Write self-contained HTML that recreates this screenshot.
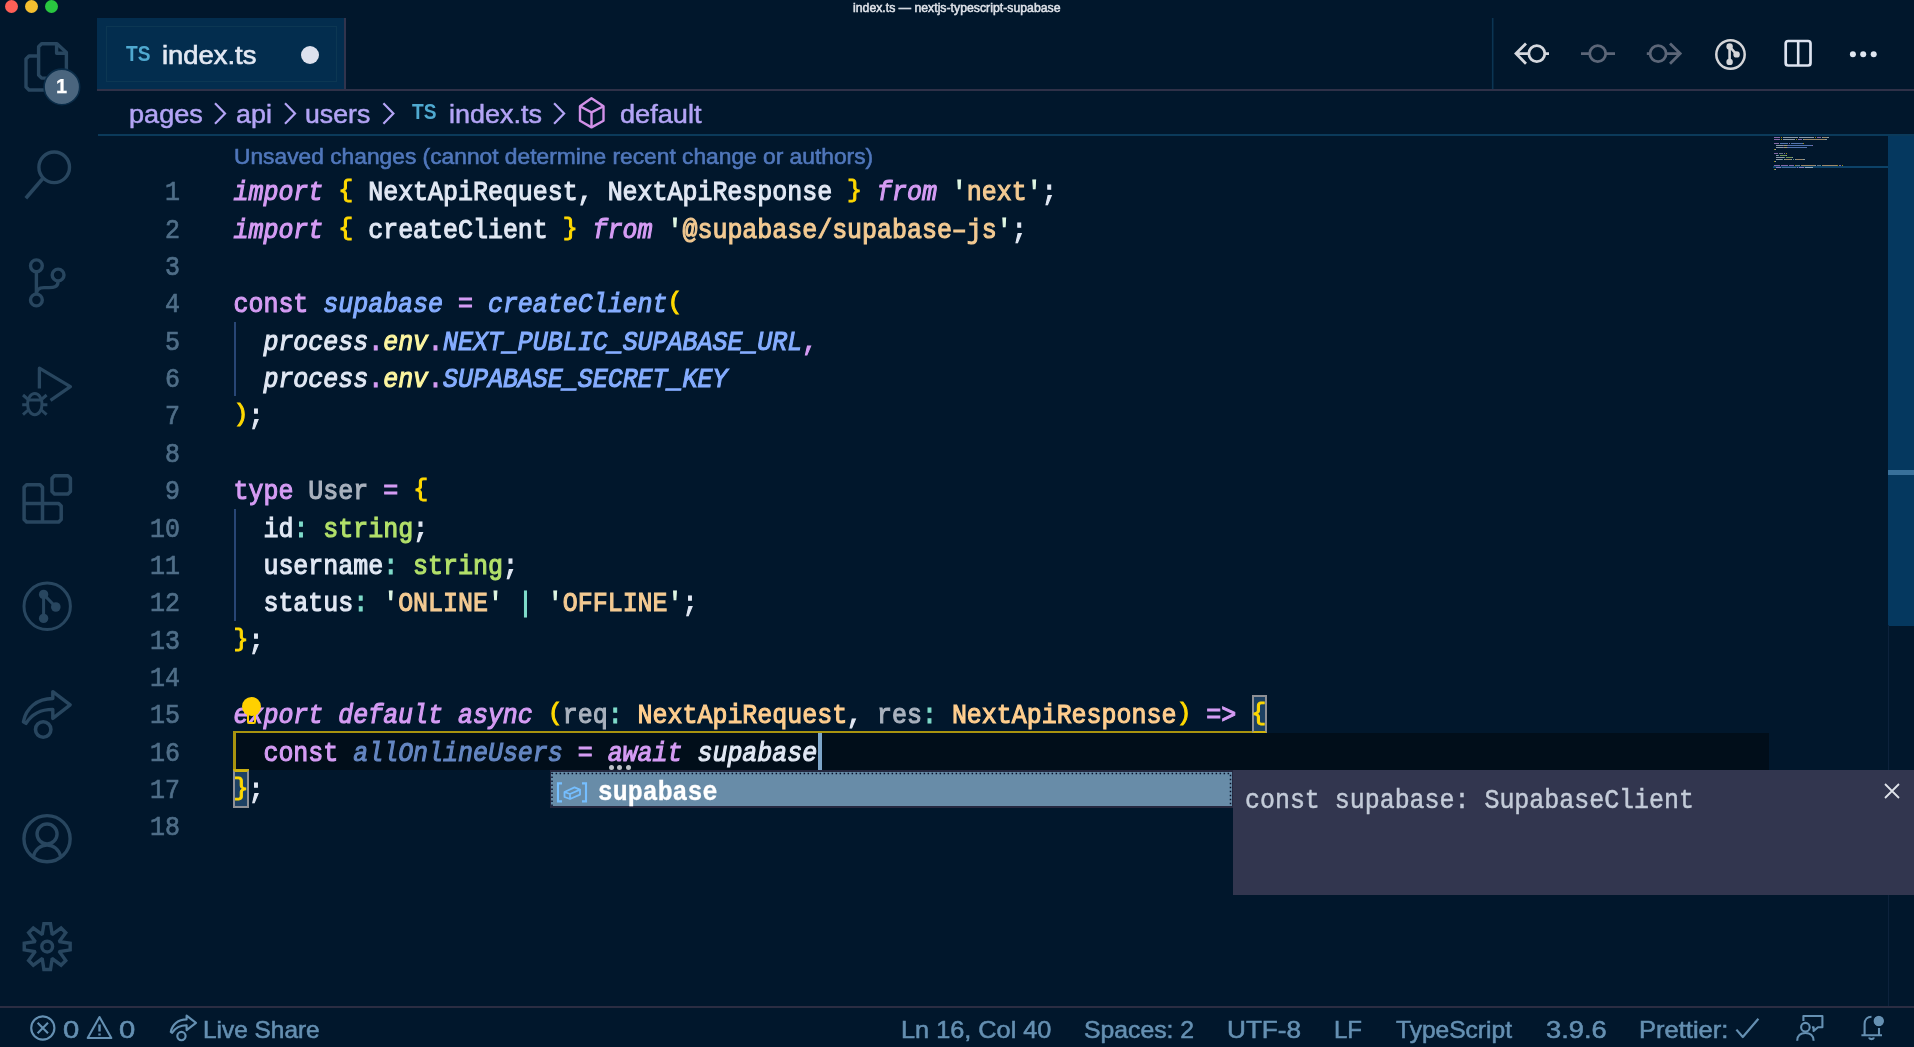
<!DOCTYPE html>
<html><head><meta charset="utf-8"><title>index.ts — nextjs-typescript-supabase</title>
<style>
*{box-sizing:border-box;margin:0;padding:0}
html,body{width:1914px;height:1047px;overflow:hidden;background:#01172c}
body{position:relative;font-family:"Liberation Sans",sans-serif;color:#d6deeb}
.abs{position:absolute}
.t{position:absolute;white-space:pre;line-height:1}
.ln{position:absolute;left:97px;width:83px;text-align:right;height:37.36px;line-height:37.36px;font-family:"Liberation Mono",monospace;font-size:24.954px;color:#4f6e88;white-space:pre;transform-origin:0 25.32px;transform:translateY(2.8px) scaleY(1.13);-webkit-text-stroke:0.65px currentColor}
.cl{position:absolute;left:233.5px;height:37.36px;line-height:37.36px;font-family:"Liberation Mono",monospace;font-size:24.954px;color:#d6deeb;white-space:pre;transform-origin:0 25.32px;transform:translateY(2.9px) scaleY(1.13)}
.cl .br{display:inline-block;transform-origin:50% 20.8px;transform:translateY(-1.8px) scaleY(0.88)}
.cl span{-webkit-text-stroke:1px currentColor}
svg{position:absolute;overflow:visible}
.ic{fill:none;stroke:#28465f;stroke-width:3;stroke-linecap:round;stroke-linejoin:round}
.sb{color:#6590b2;font-size:24px}
.t{-webkit-text-stroke:0.25px currentColor}
#bc .t{-webkit-text-stroke:0.5px currentColor}
.sb{-webkit-text-stroke:0.55px currentColor}
#wrap{position:absolute;left:0;top:0;width:1914px;height:1047px;will-change:transform}
</style></head><body><div id="wrap">
<!-- traffic lights -->
<div class="abs" style="left:4.7px;top:0.2px;width:13px;height:13px;border-radius:50%;background:#fe5f57"></div>
<div class="abs" style="left:25.099999999999998px;top:0.2px;width:13px;height:13px;border-radius:50%;background:#f5bf2f"></div>
<div class="abs" style="left:45.2px;top:0.2px;width:13px;height:13px;border-radius:50%;background:#29c740"></div>
<!-- title -->
<div class="t" id="title" style="left:853.4px;top:2.0px;font-size:12.5px;transform-origin:0 0;transform:scaleX(0.9825);color:#dfe3ea;-webkit-text-stroke:0.5px #dfe3ea">index.ts — nextjs-typescript-supabase</div>

<!-- tab bar -->
<div class="abs" style="left:97.2px;top:89.2px;width:1817px;height:2px;background:#2f3148"></div>
<div class="abs" style="left:97.2px;top:18.4px;width:246.8px;height:70.8px;background:#032d4e"></div>
<div class="abs" style="left:343.6px;top:18.4px;width:2px;height:71px;background:#31344d"></div>
<div class="abs" style="left:106px;top:26px;width:231px;height:56px;border:1.5px solid #0c3753"></div>
<div class="t" id="tabts" style="left:125.6px;top:43.6px;font-size:21.5px;font-weight:bold;transform-origin:0 0;transform:scaleX(0.89);color:#4fa9d0;-webkit-text-stroke:0">TS</div>
<div class="t" id="tabname" style="left:162.2px;top:41.5px;font-size:26px;transform-origin:0 0;transform:scaleX(1.0534);color:#e2e8f3;-webkit-text-stroke:0.65px #e2e8f3">index.ts</div>
<div class="abs" style="left:301.4px;top:45.5px;width:18px;height:18px;border-radius:50%;background:#dde1ee"></div>

<!-- breadcrumbs -->
<div class="abs" style="left:97.5px;top:134px;width:1817px;height:2px;background:#0b3a5a"></div>
<div id="bc" style="position:absolute;left:0;top:0;font-size:26px;color:#b3a4f5;-webkit-text-stroke:0.5px #b3a4f5">
<div class="t" style="left:129.4px;top:100.8px;font-size:26px;transform-origin:0 0;transform:scaleX(1.0420)">pages</div>
<div class="t" style="left:235.8px;top:100.8px;font-size:26px;transform-origin:0 0;transform:scaleX(1.0333)">api</div>
<div class="t" style="left:305.2px;top:100.8px;font-size:26px;transform-origin:0 0;transform:scaleX(1.0258)">users</div>
<div class="t" style="left:411.6px;top:102.1px;font-size:21.5px;font-weight:bold;transform-origin:0 0;transform:scaleX(0.89);color:#4fa9d0;-webkit-text-stroke:0">TS</div>
<div class="t" style="left:448.8px;top:100.8px;font-size:26px;transform-origin:0 0;transform:scaleX(1.0375)">index.ts</div>
<div class="t" style="left:620.4px;top:100.8px;font-size:26px;transform-origin:0 0;transform:scaleX(1.0442)">default</div>
</div>

<!-- codelens -->
<div class="t" id="lens" style="left:233.8px;top:145.6px;font-size:22.5px;transform-origin:0 0;transform:scaleX(1.0119);color:#5077bb;-webkit-text-stroke:0.6px #5077bb">Unsaved changes (cannot determine recent change or authors)</div>

<!-- current line highlight -->
<div class="abs" style="left:234px;top:733px;width:1535px;height:37.4px;background:#010e1a"></div>

<!-- scope box (yellow) -->
<div class="abs" style="left:233.4px;top:730.5px;width:1034px;height:2.4px;background:#a8930f"></div>
<div class="abs" style="left:233.4px;top:732.8px;width:2.8px;height:37.6px;background:#a8930f"></div>
<div class="abs" style="left:233.4px;top:769px;width:16px;height:2.4px;background:#c9ae10"></div>
<!-- bracket match boxes -->
<div class="abs" style="left:1251.8px;top:695.2px;width:15.4px;height:37.8px;border:2px solid #8e9095;background:#1d4163;border-bottom-color:#d0b30c"></div>
<div class="abs" style="left:233px;top:770.2px;width:16px;height:37.8px;border:2px solid #8e9095;background:#1d4163;border-top-color:#d0b30c"></div>

<!-- code -->
<div class="ln" style="top:172.30px">1</div>
<div class="cl" style="top:172.30px"><span style="color:#d59cf4;font-style:italic">import</span><span style="color:#e1e8f4"> </span><span class="br" style="color:#ffd900">{</span><span style="color:#e1e8f4"> NextApiRequest, NextApiResponse </span><span class="br" style="color:#ffd900">}</span><span style="color:#e1e8f4"> </span><span style="color:#d59cf4;font-style:italic">from</span><span style="color:#e1e8f4"> </span><span style="color:#dff7e3">'</span><span style="color:#f3ca92">next</span><span style="color:#dff7e3">'</span><span style="color:#e1e8f4">;</span></div>
<div class="ln" style="top:209.66px">2</div>
<div class="cl" style="top:209.66px"><span style="color:#d59cf4;font-style:italic">import</span><span style="color:#e1e8f4"> </span><span class="br" style="color:#ffd900">{</span><span style="color:#e1e8f4"> createClient </span><span class="br" style="color:#ffd900">}</span><span style="color:#e1e8f4"> </span><span style="color:#d59cf4;font-style:italic">from</span><span style="color:#e1e8f4"> </span><span style="color:#dff7e3">'</span><span style="color:#f3ca92">@supabase/supabase–js</span><span style="color:#dff7e3">'</span><span style="color:#e1e8f4">;</span></div>
<div class="ln" style="top:247.02px">3</div>
<div class="ln" style="top:284.38px">4</div>
<div class="cl" style="top:284.38px"><span style="color:#d59cf4">const</span><span style="color:#e1e8f4"> </span><span style="color:#85adff;font-style:italic">supabase</span><span style="color:#e1e8f4"> </span><span style="color:#d59cf4">=</span><span style="color:#e1e8f4"> </span><span style="color:#85adff;font-style:italic">createClient</span><span class="br" style="color:#ffd900">(</span></div>
<div class="ln" style="top:321.74px">5</div>
<div class="cl" style="top:321.74px"><span style="color:#e1e8f4">  </span><span style="color:#e1e8f4;font-style:italic">process</span><span style="color:#d59cf4">.</span><span style="color:#fdf6a0;font-style:italic">env</span><span style="color:#d59cf4">.</span><span style="color:#85adff;font-style:italic">NEXT_PUBLIC_SUPABASE_URL</span><span style="color:#d59cf4">,</span></div>
<div class="ln" style="top:359.10px">6</div>
<div class="cl" style="top:359.10px"><span style="color:#e1e8f4">  </span><span style="color:#e1e8f4;font-style:italic">process</span><span style="color:#d59cf4">.</span><span style="color:#fdf6a0;font-style:italic">env</span><span style="color:#d59cf4">.</span><span style="color:#85adff;font-style:italic">SUPABASE_SECRET_KEY</span></div>
<div class="ln" style="top:396.46px">7</div>
<div class="cl" style="top:396.46px"><span class="br" style="color:#ffd900">)</span><span style="color:#e1e8f4">;</span></div>
<div class="ln" style="top:433.82px">8</div>
<div class="ln" style="top:471.18px">9</div>
<div class="cl" style="top:471.18px"><span style="color:#d59cf4">type</span><span style="color:#e1e8f4"> </span><span style="color:#a9b2be">User</span><span style="color:#e1e8f4"> </span><span style="color:#d59cf4">=</span><span style="color:#e1e8f4"> </span><span class="br" style="color:#ffd900">{</span></div>
<div class="ln" style="top:508.54px">10</div>
<div class="cl" style="top:508.54px"><span style="color:#e1e8f4">  id</span><span style="color:#7fdbca">:</span><span style="color:#e1e8f4"> </span><span style="color:#b2e06a">string</span><span style="color:#e1e8f4">;</span></div>
<div class="ln" style="top:545.90px">11</div>
<div class="cl" style="top:545.90px"><span style="color:#e1e8f4">  username</span><span style="color:#7fdbca">:</span><span style="color:#e1e8f4"> </span><span style="color:#b2e06a">string</span><span style="color:#e1e8f4">;</span></div>
<div class="ln" style="top:583.26px">12</div>
<div class="cl" style="top:583.26px"><span style="color:#e1e8f4">  status</span><span style="color:#7fdbca">:</span><span style="color:#e1e8f4"> </span><span style="color:#dff7e3">'</span><span style="color:#f3ca92">ONLINE</span><span style="color:#dff7e3">'</span><span style="color:#e1e8f4"> </span><span style="color:#7fdbca">|</span><span style="color:#e1e8f4"> </span><span style="color:#dff7e3">'</span><span style="color:#f3ca92">OFFLINE</span><span style="color:#dff7e3">'</span><span style="color:#e1e8f4">;</span></div>
<div class="ln" style="top:620.62px">13</div>
<div class="cl" style="top:620.62px"><span class="br" style="color:#ffd900">}</span><span style="color:#e1e8f4">;</span></div>
<div class="ln" style="top:657.98px">14</div>
<div class="ln" style="top:695.34px">15</div>
<div class="cl" style="top:695.34px"><span style="color:#d59cf4;font-style:italic">export default async</span><span style="color:#e1e8f4"> </span><span class="br" style="color:#ffd900">(</span><span style="color:#a9b2be">req</span><span style="color:#7fdbca">:</span><span style="color:#e1e8f4"> </span><span style="color:#ffce8e">NextApiRequest</span><span style="color:#e1e8f4">,</span><span style="color:#e1e8f4"> </span><span style="color:#a9b2be">res</span><span style="color:#7fdbca">:</span><span style="color:#e1e8f4"> </span><span style="color:#ffce8e">NextApiResponse</span><span class="br" style="color:#ffd900">)</span><span style="color:#e1e8f4"> </span><span style="color:#d59cf4">=&gt;</span><span style="color:#e1e8f4"> </span><span class="br" style="color:#ffd900">{</span></div>
<div class="ln" style="top:732.70px">16</div>
<div class="cl" style="top:732.70px"><span style="color:#e1e8f4">  </span><span style="color:#d59cf4">const</span><span style="color:#e1e8f4"> </span><span style="color:#6486c2;font-style:italic">allOnlineUsers</span><span style="color:#e1e8f4"> </span><span style="color:#d59cf4">=</span><span style="color:#e1e8f4"> </span><span style="color:#d59cf4;font-style:italic">await</span><span style="color:#e1e8f4"> </span><span style="color:#e1e8f4;font-style:italic">supabase</span></div>
<div class="ln" style="top:770.06px">17</div>
<div class="cl" style="top:770.06px"><span class="br" style="color:#ffd900">}</span><span style="color:#e1e8f4">;</span></div>
<div class="ln" style="top:807.42px">18</div>


<!-- ICONS -->
<svg width="1914" height="1047" viewBox="0 0 1914 1047" style="left:0;top:0">
<g fill="none" stroke="#28465f" stroke-width="3.4" stroke-linejoin="round">
<path d="M38.6 56 L29 56 L26 59 L26 87 L29 90 L58 90"/>
<path d="M41.6 43.75 L57 43.75 L66.4 52.6 L66.4 75.1 L63.4 78.1 L41.6 78.1 L38.6 75.1 L38.6 46.75 Z"/>
<path d="M56.6 43.75 L56.6 53.3 L66.4 53.3"/>
<circle cx="54.2" cy="167.3" r="15.3"/>
<path d="M42.6 178.8 L25.8 198.2" stroke-width="3.6"/>
<circle cx="36.4" cy="265.8" r="5.9"/><circle cx="36.4" cy="300" r="5.9"/><circle cx="58.1" cy="275" r="5.9"/>
<path d="M36.4 271.7 L36.4 294.1"/>
<path d="M58.1 280.9 C58.1 287.6 53 287.6 49 287.6 L44 287.6 C39 287.6 36.4 290 36.4 294.1"/>
<path d="M39.4 388.6 L39.4 368.2 L70.4 386.7 L50.5 400.3" stroke-width="3.3"/>
<ellipse cx="34.8" cy="404.2" rx="7.2" ry="10.6" stroke-width="3"/>
<path d="M27.6 400 L42 400 M23 395 L27.6 399 M46.6 395 L42 399 M22.2 404.8 L27.6 404.8 M42 404.8 L47.4 404.8 M23 414.6 L28.2 410 M46.6 414.6 L41.4 410" stroke-width="3"/>
<path d="M26.6 484.8 L40 484.8 L42.5 487.3 L42.5 503.5 L58.7 503.5 L61.2 506 L61.2 519.4 L58.7 521.9 L26.6 521.9 L24.1 519.4 L24.1 487.3 Z" stroke-width="3.5"/>
<path d="M42.5 503.5 L42.5 521.9 M24.1 503.5 L42.5 503.5" stroke-width="3.5"/>
<path d="M54.5 475.7 L67.9 475.7 L70.4 478.2 L70.4 491.5 L67.9 494 L54.5 494 L52 491.5 L52 478.2 Z" stroke-width="3.5"/>
<circle cx="47.2" cy="606.3" r="23.2" stroke-width="3"/>
<path d="M43.6 594.4 L43.6 618.4 M43.6 594.4 L55.8 607" stroke-width="3"/>
<g fill="#28465f" stroke="none"><circle cx="43.6" cy="594.4" r="4.7"/><circle cx="55.8" cy="607" r="4.8"/><circle cx="43.6" cy="618.4" r="4.7"/></g>
<path d="M23.4 721.8 C26 708 37 698.5 52.8 698.5 L52.8 691.6 L70.2 704.8 L52.8 718.4 L52.8 709.4 C41 709.4 32.5 713 26 723.4 Z" stroke-width="3.4" stroke-linejoin="round"/>
<circle cx="43.2" cy="729.5" r="7.7" stroke-width="3.6"/>
<circle cx="47.05" cy="838.7" r="23.1"/>
<circle cx="47.05" cy="834" r="10"/>
<path d="M33.3 857 C35 849 41 845 47.05 845 C53 845 59 849 60.8 857"/>
<path d="M42.30 933.91 L43.90 923.64 L50.50 923.64 L52.10 933.91 L52.71 934.16 L61.10 928.03 L65.77 932.70 L59.64 941.09 L59.89 941.70 L70.16 943.30 L70.16 949.90 L59.89 951.50 L59.64 952.11 L65.77 960.50 L61.10 965.17 L52.71 959.04 L52.10 959.29 L50.50 969.56 L43.90 969.56 L42.30 959.29 L41.69 959.04 L33.30 965.17 L28.63 960.50 L34.76 952.11 L34.51 951.50 L24.24 949.90 L24.24 943.30 L34.51 941.70 L34.76 941.09 L28.63 932.70 L33.30 928.03 L41.69 934.16Z" stroke-linejoin="miter"/>
<circle cx="47.2" cy="946.6" r="5.4"/>
</g>
<circle cx="61.9" cy="86.9" r="17.8" fill="#4a657e" stroke="#0a2c48" stroke-width="1.6"/>
<path d="M1492.7 18 L1492.7 89" stroke="#0b3553" stroke-width="1.6"/>
<g fill="none" stroke="#d5d8de" stroke-width="2.8">
<circle cx="1536.8" cy="53.6" r="8.0"/><path d="M1516.5 53.6 L1528.8 53.6 M1544.8 53.6 L1549 53.6 M1526 43.6 L1516 53.6 L1526 63.8"/>
</g>
<g fill="none" stroke="#5c6678" stroke-width="2.8">
<circle cx="1597.7" cy="53.6" r="8.0"/><path d="M1581 53.6 L1589.7 53.6 M1605.7 53.6 L1615 53.6"/>
<circle cx="1658.1" cy="53.6" r="8.0"/><path d="M1646.8 53.6 L1650.1 53.6 M1666.1 53.6 L1679.6 53.6 M1670 43.6 L1680.2 53.6 L1670 63.8"/>
</g>
<g fill="none" stroke="#d4d5d8" stroke-width="2.5">
<circle cx="1730.5" cy="54.5" r="14.2"/><path d="M1729.6 46.5 L1729.6 61.8 M1729.6 46.5 L1736.4 54.3" stroke-width="2.6"/>
</g>
<g fill="#d4d5d8"><circle cx="1729.6" cy="46.5" r="3.2"/><circle cx="1736.6" cy="54.4" r="3.2"/><circle cx="1729.6" cy="61.9" r="3.2"/></g>
<rect x="1785.7" y="41" width="24.8" height="24.5" rx="2.5" fill="none" stroke="#dde3f0" stroke-width="2.7"/>
<path d="M1798.2 41 L1798.2 65.5" stroke="#dde3f0" stroke-width="2.6"/>
<g fill="#e0e6f0"><circle cx="1852.9" cy="54.3" r="3"/><circle cx="1863.2" cy="54.3" r="3"/><circle cx="1873.7" cy="54.3" r="3"/></g>
<g fill="none" stroke="#b3a4f5" stroke-width="2.2">
<path d="M215.0 103.2 L225.0 113.4 L215.0 123.8"/>
<path d="M285.0 103.2 L295.0 113.4 L285.0 123.8"/>
<path d="M383.4 103.2 L393.4 113.4 L383.4 123.8"/>
<path d="M554.1 103.2 L564.1 113.4 L554.1 123.8"/>
</g>
<g fill="none" stroke="#d291e8" stroke-width="2.4" stroke-linejoin="round"><path d="M591.5 98.2 L603.5 106.2 L603.5 120.8 L591.5 127.4 L580 120.8 L580 106.2 Z"/><path d="M580 106.2 L591.5 112.4 L603.5 106.2 M591.5 112.4 L591.5 127.4"/></g>
<g fill="none" stroke="#6590b2" stroke-width="2.1" stroke-linejoin="round">
<circle cx="42.8" cy="1028" r="11.6"/><path d="M37.6 1022.8 L48 1033.2 M48 1022.8 L37.6 1033.2"/>
<path d="M99.5 1017 L111.3 1038 L87.7 1038 Z"/><path d="M99.5 1024.5 L99.5 1031.6 M99.5 1033.4 L99.5 1035.6" stroke-width="2.4"/>
<g transform="translate(158.2 643.6) scale(0.538)"><path d="M23.4 721.8 C26 708 37 698.5 52.8 698.5 L52.8 691.6 L70.2 704.8 L52.8 718.4 L52.8 709.4 C41 709.4 32.5 713 26 723.4 Z" stroke-width="4" stroke-linejoin="round"/><circle cx="43.2" cy="729.5" r="7.7" stroke-width="4"/></g>
<path d="M1736.4 1029.6 L1742.8 1037 L1758.4 1018.8" stroke-width="2.2"/>
<circle cx="1805.4" cy="1027.2" r="4.3"/><path d="M1797.2 1040.8 C1797.2 1035.5 1800.8 1033 1805.4 1033 C1810 1033 1813.6 1035.5 1813.6 1040.8"/>
<path d="M1803.4 1021 L1803.4 1016 L1822.4 1016 L1822.4 1027.2 L1818 1027.2 L1813.6 1031 L1813.6 1027.2 L1812 1027.2"/>
<path d="M1861.4 1035.2 L1882 1035.2 M1864.6 1035 L1864.6 1024 C1864.6 1019.5 1867.5 1016.8 1871.5 1016.8 M1879 1028 L1879 1035"/><path d="M1869 1037.5 C1869.6 1039.6 1873.4 1039.6 1874 1037.5"/>
</g>
<circle cx="1878.8" cy="1021" r="5.8" fill="#6590b2" stroke="#01172c" stroke-width="1.2"/>
</svg>
<div class="t" id="badge1" style="left:56px;top:76px;font-size:20px;font-weight:bold;color:#fff">1</div>

<!-- indent guides -->
<div class="abs" style="left:234px;top:321.8px;width:1.8px;height:74.6px;background:#284675"></div>
<div class="abs" style="left:234px;top:508.6px;width:1.8px;height:112px;background:#284675"></div>

<!-- cursor -->
<div class="abs" style="left:818.3px;top:733px;width:4.2px;height:37px;background:#7ea6c9"></div>
<!-- dots under await -->
<div class="abs" style="left:608.9000000000001px;top:764.6px;width:5px;height:5px;border-radius:50%;background:#bcc1c7"></div>
<div class="abs" style="left:617.2px;top:764.6px;width:5px;height:5px;border-radius:50%;background:#bcc1c7"></div>
<div class="abs" style="left:625.5px;top:764.6px;width:5px;height:5px;border-radius:50%;background:#bcc1c7"></div>
<!-- lightbulb -->
<div class="abs" style="left:241.9px;top:696.9px;width:19.4px;height:19.4px;border-radius:50%;background:#ffd000"></div>
<div class="abs" style="left:247.3px;top:713px;width:8.4px;height:11.4px;border-radius:0 0 2.5px 2.5px;border:2.2px solid #ffd000;border-top:none"></div>

<!-- minimap + scrollbar -->
<div class="abs" style="left:1888px;top:136px;width:26px;height:489.5px;background:#05385f"></div>
<div class="abs" style="left:1888px;top:470px;width:26px;height:5px;background:#39709a"></div>
<div class="abs" style="left:1887.5px;top:625px;width:1.5px;height:381px;background:#0d223c"></div>
<div class="abs" style="left:1773px;top:166px;width:115px;height:2.4px;background:#0c4268"></div>

<svg width="1914" height="1047" viewBox="0 0 1914 1047" style="left:0;top:0" shape-rendering="crispEdges">
<rect x="1773.8" y="136.9" width="6.0" height="1.5" fill="#d59cf4" opacity="0.62"/>
<rect x="1780.8" y="136.9" width="1.0" height="1.5" fill="#ffd900" opacity="0.62"/>
<rect x="1782.8" y="136.9" width="15.0" height="1.5" fill="#e1e8f4" opacity="0.62"/>
<rect x="1798.8" y="136.9" width="15.0" height="1.5" fill="#e1e8f4" opacity="0.62"/>
<rect x="1814.8" y="136.9" width="1.0" height="1.5" fill="#ffd900" opacity="0.62"/>
<rect x="1816.8" y="136.9" width="4.0" height="1.5" fill="#d59cf4" opacity="0.62"/>
<rect x="1821.8" y="136.9" width="1.0" height="1.5" fill="#dff7e3" opacity="0.62"/>
<rect x="1822.8" y="136.9" width="4.0" height="1.5" fill="#f3ca92" opacity="0.62"/>
<rect x="1826.8" y="136.9" width="1.0" height="1.5" fill="#dff7e3" opacity="0.62"/>
<rect x="1827.8" y="136.9" width="1.0" height="1.5" fill="#e1e8f4" opacity="0.62"/>
<rect x="1773.8" y="138.9" width="6.0" height="1.5" fill="#d59cf4" opacity="0.62"/>
<rect x="1780.8" y="138.9" width="1.0" height="1.5" fill="#ffd900" opacity="0.62"/>
<rect x="1782.8" y="138.9" width="12.0" height="1.5" fill="#e1e8f4" opacity="0.62"/>
<rect x="1795.8" y="138.9" width="1.0" height="1.5" fill="#ffd900" opacity="0.62"/>
<rect x="1797.8" y="138.9" width="4.0" height="1.5" fill="#d59cf4" opacity="0.62"/>
<rect x="1802.8" y="138.9" width="1.0" height="1.5" fill="#dff7e3" opacity="0.62"/>
<rect x="1803.8" y="138.9" width="21.0" height="1.5" fill="#f3ca92" opacity="0.62"/>
<rect x="1824.8" y="138.9" width="1.0" height="1.5" fill="#dff7e3" opacity="0.62"/>
<rect x="1825.8" y="138.9" width="1.0" height="1.5" fill="#e1e8f4" opacity="0.62"/>
<rect x="1773.8" y="142.9" width="5.0" height="1.5" fill="#d59cf4" opacity="0.62"/>
<rect x="1779.8" y="142.9" width="8.0" height="1.5" fill="#85adff" opacity="0.62"/>
<rect x="1788.8" y="142.9" width="1.0" height="1.5" fill="#d59cf4" opacity="0.62"/>
<rect x="1790.8" y="142.9" width="12.0" height="1.5" fill="#85adff" opacity="0.62"/>
<rect x="1802.8" y="142.9" width="1.0" height="1.5" fill="#ffd900" opacity="0.62"/>
<rect x="1775.8" y="144.9" width="7.0" height="1.5" fill="#e1e8f4" opacity="0.62"/>
<rect x="1782.8" y="144.9" width="1.0" height="1.5" fill="#d59cf4" opacity="0.62"/>
<rect x="1783.8" y="144.9" width="3.0" height="1.5" fill="#fdf6a0" opacity="0.62"/>
<rect x="1786.8" y="144.9" width="1.0" height="1.5" fill="#d59cf4" opacity="0.62"/>
<rect x="1787.8" y="144.9" width="24.0" height="1.5" fill="#85adff" opacity="0.62"/>
<rect x="1811.8" y="144.9" width="1.0" height="1.5" fill="#d59cf4" opacity="0.62"/>
<rect x="1775.8" y="146.9" width="7.0" height="1.5" fill="#e1e8f4" opacity="0.62"/>
<rect x="1782.8" y="146.9" width="1.0" height="1.5" fill="#d59cf4" opacity="0.62"/>
<rect x="1783.8" y="146.9" width="3.0" height="1.5" fill="#fdf6a0" opacity="0.62"/>
<rect x="1786.8" y="146.9" width="1.0" height="1.5" fill="#d59cf4" opacity="0.62"/>
<rect x="1787.8" y="146.9" width="19.0" height="1.5" fill="#85adff" opacity="0.62"/>
<rect x="1773.8" y="148.9" width="1.0" height="1.5" fill="#ffd900" opacity="0.62"/>
<rect x="1774.8" y="148.9" width="1.0" height="1.5" fill="#e1e8f4" opacity="0.62"/>
<rect x="1773.8" y="152.9" width="4.0" height="1.5" fill="#d59cf4" opacity="0.62"/>
<rect x="1778.8" y="152.9" width="4.0" height="1.5" fill="#a9b2be" opacity="0.62"/>
<rect x="1783.8" y="152.9" width="1.0" height="1.5" fill="#d59cf4" opacity="0.62"/>
<rect x="1785.8" y="152.9" width="1.0" height="1.5" fill="#ffd900" opacity="0.62"/>
<rect x="1775.8" y="154.9" width="2.0" height="1.5" fill="#e1e8f4" opacity="0.62"/>
<rect x="1777.8" y="154.9" width="1.0" height="1.5" fill="#7fdbca" opacity="0.62"/>
<rect x="1779.8" y="154.9" width="6.0" height="1.5" fill="#b2e06a" opacity="0.62"/>
<rect x="1785.8" y="154.9" width="1.0" height="1.5" fill="#e1e8f4" opacity="0.62"/>
<rect x="1775.8" y="156.9" width="8.0" height="1.5" fill="#e1e8f4" opacity="0.62"/>
<rect x="1783.8" y="156.9" width="1.0" height="1.5" fill="#7fdbca" opacity="0.62"/>
<rect x="1785.8" y="156.9" width="6.0" height="1.5" fill="#b2e06a" opacity="0.62"/>
<rect x="1791.8" y="156.9" width="1.0" height="1.5" fill="#e1e8f4" opacity="0.62"/>
<rect x="1775.8" y="158.9" width="6.0" height="1.5" fill="#e1e8f4" opacity="0.62"/>
<rect x="1781.8" y="158.9" width="1.0" height="1.5" fill="#7fdbca" opacity="0.62"/>
<rect x="1783.8" y="158.9" width="1.0" height="1.5" fill="#dff7e3" opacity="0.62"/>
<rect x="1784.8" y="158.9" width="6.0" height="1.5" fill="#f3ca92" opacity="0.62"/>
<rect x="1790.8" y="158.9" width="1.0" height="1.5" fill="#dff7e3" opacity="0.62"/>
<rect x="1792.8" y="158.9" width="1.0" height="1.5" fill="#7fdbca" opacity="0.62"/>
<rect x="1794.8" y="158.9" width="1.0" height="1.5" fill="#dff7e3" opacity="0.62"/>
<rect x="1795.8" y="158.9" width="7.0" height="1.5" fill="#f3ca92" opacity="0.62"/>
<rect x="1802.8" y="158.9" width="1.0" height="1.5" fill="#dff7e3" opacity="0.62"/>
<rect x="1803.8" y="158.9" width="1.0" height="1.5" fill="#e1e8f4" opacity="0.62"/>
<rect x="1773.8" y="160.9" width="1.0" height="1.5" fill="#ffd900" opacity="0.62"/>
<rect x="1774.8" y="160.9" width="1.0" height="1.5" fill="#e1e8f4" opacity="0.62"/>
<rect x="1773.8" y="164.9" width="6.0" height="1.5" fill="#d59cf4" opacity="0.62"/>
<rect x="1780.8" y="164.9" width="7.0" height="1.5" fill="#d59cf4" opacity="0.62"/>
<rect x="1788.8" y="164.9" width="5.0" height="1.5" fill="#d59cf4" opacity="0.62"/>
<rect x="1794.8" y="164.9" width="1.0" height="1.5" fill="#ffd900" opacity="0.62"/>
<rect x="1795.8" y="164.9" width="3.0" height="1.5" fill="#a9b2be" opacity="0.62"/>
<rect x="1798.8" y="164.9" width="1.0" height="1.5" fill="#7fdbca" opacity="0.62"/>
<rect x="1800.8" y="164.9" width="14.0" height="1.5" fill="#ffce8e" opacity="0.62"/>
<rect x="1814.8" y="164.9" width="1.0" height="1.5" fill="#e1e8f4" opacity="0.62"/>
<rect x="1816.8" y="164.9" width="3.0" height="1.5" fill="#a9b2be" opacity="0.62"/>
<rect x="1819.8" y="164.9" width="1.0" height="1.5" fill="#7fdbca" opacity="0.62"/>
<rect x="1821.8" y="164.9" width="15.0" height="1.5" fill="#ffce8e" opacity="0.62"/>
<rect x="1836.8" y="164.9" width="1.0" height="1.5" fill="#ffd900" opacity="0.62"/>
<rect x="1838.8" y="164.9" width="2.0" height="1.5" fill="#d59cf4" opacity="0.62"/>
<rect x="1841.8" y="164.9" width="1.0" height="1.5" fill="#ffd900" opacity="0.62"/>
<rect x="1775.8" y="166.9" width="5.0" height="1.5" fill="#d59cf4" opacity="0.62"/>
<rect x="1781.8" y="166.9" width="14.0" height="1.5" fill="#6486c2" opacity="0.62"/>
<rect x="1796.8" y="166.9" width="1.0" height="1.5" fill="#d59cf4" opacity="0.62"/>
<rect x="1798.8" y="166.9" width="5.0" height="1.5" fill="#d59cf4" opacity="0.62"/>
<rect x="1804.8" y="166.9" width="8.0" height="1.5" fill="#e1e8f4" opacity="0.62"/>
<rect x="1773.8" y="168.9" width="1.0" height="1.5" fill="#ffd900" opacity="0.62"/>
<rect x="1774.8" y="168.9" width="1.0" height="1.5" fill="#e1e8f4" opacity="0.62"/>
</svg>
<!-- suggest widget -->
<div class="abs" style="left:549.5px;top:770px;width:684px;height:37.6px;background:#25283f"></div>
<div class="abs" style="left:551px;top:772.4px;width:680.6px;height:33.4px;background:#688ca8"></div>
<div class="cl" id="sugg" style="left:597.8px;top:772.2px;color:#fff;font-weight:bold"><span style="-webkit-text-stroke:0.3px #fff">supabase</span></div>
<!-- details -->
<div class="abs" style="left:1233px;top:770px;width:681px;height:124.6px;background:#32364f"></div>
<div class="cl" id="det" style="left:1245px;top:780px;color:#c3cbd8"><span style="-webkit-text-stroke:0.45px currentColor">const supabase: SupabaseClient</span></div>


<!-- TOPICONS -->
<svg width="1914" height="1047" viewBox="0 0 1914 1047" style="left:0;top:0">
<g fill="none" stroke="#75beff" stroke-width="2.1"><path d="M562 783.4 L558 783.4 L558 801.4 L562 801.4 M582 783.4 L586 783.4 L586 801.4 L582 801.4"/>
<path d="M564.5 792 L574.5 787.4 L580 789.6 L580 794.6 L570 799 L564.5 797 Z M564.5 792 L570 794 L580 789.6 M570 794 L570 799" stroke-linejoin="round" stroke-width="1.8"/></g>
<path d="M552 806 L552 773.6 L1230.5 773.6 L1230.5 806" fill="none" stroke="#07112a" stroke-width="1.5" stroke-dasharray="1.5 2.5"/>
<path d="M1885 784 L1899 798 M1899 784 L1885 798" stroke="#dfe3ea" stroke-width="1.8" fill="none"/>
</svg>
<!-- status bar -->
<div class="abs" style="left:0;top:1005.6px;width:1914px;height:2px;background:#2b2d42"></div>
<div class="t sb" style="left:63px;top:1017.5px;font-size:24px;transform-origin:0 0;transform:scaleX(1.2167)">0</div>
<div class="t sb" style="left:202.5px;top:1017.5px;font-size:24px;transform-origin:0 0;transform:scaleX(1.0170)">Live Share</div>
<div class="t sb" style="left:901.3px;top:1017.5px;font-size:24px;transform-origin:0 0;transform:scaleX(1.0536)">Ln 16, Col 40</div>
<div class="t sb" style="left:1084.1px;top:1017.5px;font-size:24px;transform-origin:0 0;transform:scaleX(1.0314)">Spaces: 2</div>
<div class="t sb" style="left:1226.5px;top:1017.5px;font-size:24px;transform-origin:0 0;transform:scaleX(1.0894)">UTF-8</div>
<div class="t sb" style="left:1334px;top:1017.5px;font-size:24px;transform-origin:0 0;transform:scaleX(1.0000)">LF</div>
<div class="t sb" style="left:1395.9px;top:1017.5px;font-size:24px;transform-origin:0 0;transform:scaleX(1.0228)">TypeScript</div>
<div class="t sb" style="left:1545.9px;top:1017.5px;font-size:24px;transform-origin:0 0;transform:scaleX(1.1365)">3.9.6</div>
<div class="t sb" style="left:1638.9px;top:1017.5px;font-size:24px;transform-origin:0 0;transform:scaleX(1.0637)">Prettier:</div>
<div class="t sb" style="left:119.4px;top:1017.5px;font-size:24px;transform-origin:0 0;transform:scaleX(1.2167)">0</div>
</div></body></html>
